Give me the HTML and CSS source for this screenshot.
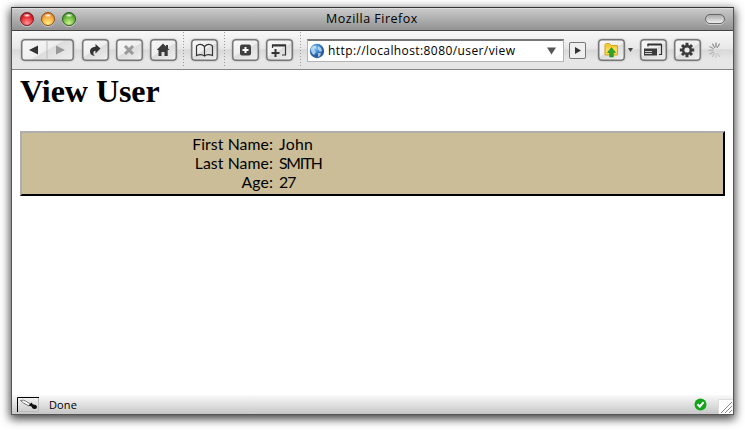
FILE: index.html
```html
<!DOCTYPE html>
<html lang="en">
<head>
<meta charset="utf-8">
<title>Mozilla Firefox</title>
<link rel="stylesheet" href="styles.css">
</head>
<body>
<div class="window">
  <header class="titlebar">
    <div class="lights"><i class="light red"></i><i class="light amber"></i><i class="light green"></i></div>
    <span class="title">Mozilla Firefox</span>
    <i class="pill"></i>
  </header>
  <nav class="toolbar">
    <div class="btn history">
      <svg width="52" height="22" viewBox="0 0 52 22"><path d="M26 1v20" stroke="#bbb"/><path d="M8 11l9-4.500v9z" fill="#333"/><path d="M44 11l-9-4.500v9z" fill="#999"/></svg>
    </div>
    <div class="btn reload"><svg width="27" height="22" viewBox="0 0 27 22"><path d="M18.500 9.500L13.500 5v2.800c-3.800.2-5.500 2.200-5.500 4.800 0 2.500 1.700 4.300 5 4.400-2-1.500-2.600-5 .5-5.300v2.800z" fill="#333"/></svg></div>
    <div class="btn stop"><svg width="27" height="22" viewBox="0 0 27 22"><path d="M9 7l8 8m0-8l-8 8" stroke="#999" stroke-width="3"/></svg></div>
    <div class="btn home"><svg width="27" height="22" viewBox="0 0 27 22"><path d="M13 4.500l6.500 6.500h-1.800v6h-3.200v-4h-3v4H8.500v-6H6.700z" fill="#3b3b3b"/><path d="M16 6h2v4h-2z" fill="#3b3b3b"/></svg></div>
    <i class="divider"></i>
    <div class="btn book"><svg width="27" height="22" viewBox="0 0 27 22"><path d="M13.500 7.500Q9.500 3.500 5.500 7v9.500q5-2 8 .5 3-2.500 8-.5V7Q17.500 3.500 13.500 7.500v9.500" fill="none" stroke="#333" stroke-width="1.200"/></svg></div>
    <i class="divider"></i>
    <div class="btn newtab"><svg width="27" height="22" viewBox="0 0 27 22"><rect x="8" y="5.500" width="11" height="11" rx="2" fill="#3f3f3f"/><path d="M13.500 8v6m-3-3h6" stroke="#fff" stroke-width="2"/></svg></div>
    <div class="btn newwin"><svg width="27" height="22" viewBox="0 0 27 22"><path d="M6.500 9V6h13v10H16" fill="none" stroke="#333" stroke-width="1.200"/><path d="M6 6.500h14M9.500 10v8m-4-4h8" stroke="#333" stroke-width="2"/></svg></div>
    <i class="divider"></i>
    <div class="address">
      <svg class="globe" width="16" height="16" viewBox="0 0 16 16"><defs><radialGradient id="sea" cx=".4" cy=".3"><stop offset="0" stop-color="#92cbf3"/><stop offset=".6" stop-color="#3c87cf"/><stop offset="1" stop-color="#2b5fa4"/></radialGradient></defs><circle cx="8" cy="8" r="7.200" fill="url(#sea)"/><path d="M2 5q2-3 5-2l0 2-2 1 1 2 1 1-2 3Q3 11 2 8zM9 3l3 2 1 3-2 1-2-3zM9 10l3 0-1 3-2 1z" fill="#e4f4fd" opacity=".65"/></svg>
      <span class="url">http://localhost:8080/user/view</span>
      <svg class="drop" width="9" height="8" viewBox="0 0 9 8"><path d="M0 .5h9L4.500 7.500z" fill="#555"/></svg>
    </div>
    <div class="go"><svg width="17" height="17" viewBox="0 0 17 17"><path d="M6 5l6 3.500L6 12z" fill="#333"/></svg></div>
    <div class="btn folder"><svg width="27" height="22" viewBox="0 0 27 22"><path d="M7 5.500l1-1h3.500l1.500 2h6.500V16H7z" fill="#f5ca35" stroke="#d4a725"/><path d="M8 8.500h11V15H8z" fill="#f9dc55"/><path d="M13.500 8.500l4 5h-2.200V18h-3.600v-4.500H9.500z" fill="#2fa52a" stroke="#17751a" stroke-width=".5"/></svg></div>
    <svg class="caret" width="5" height="4" viewBox="0 0 5 4"><path d="M0 0h5L2.500 4z" fill="#444"/></svg>
    <div class="btn panes"><svg width="27" height="22" viewBox="0 0 27 22"><path d="M8 7.500V5.500h13.500V15.500h-2.500" fill="none" stroke="#333" stroke-width="1.200"/><path d="M7.500 5.500h14" stroke="#333" stroke-width="2"/><rect x="4" y="9.500" width="13" height="7" fill="#3b3b3b"/><path d="M5 12.500h7M5 14.500h7" stroke="#ccc"/></svg></div>
    <div class="btn gear"><svg width="27" height="22" viewBox="0 0 27 22"><g stroke="#3b3b3b" stroke-width="3"><path d="M13 3.800v14.400M5.800 11h14.400M8 6l10 10M18 6L8 16"/></g><circle cx="13" cy="11" r="5" fill="#3b3b3b"/><circle cx="13" cy="11" r="2.600" fill="#ececec"/></svg></div>
    <svg class="spinner" width="16" height="16" viewBox="0 0 16 16"><g stroke-width="1.100" stroke-linecap="round"><path d="M8 1v4" stroke="#777"/><path d="M4.500 2l2 3.300" stroke="#888"/><path d="M1.800 4.700l3.500 1.900" stroke="#999"/><path d="M1 8.300h4" stroke="#aaa"/><path d="M2 12l3.300-2" stroke="#aaa"/><path d="M4.500 14.500l2-3.200" stroke="#bbb"/><path d="M8 15.300v-3.500M11.500 14.500l-2-3.200" stroke="#c5c5c5"/><path d="M14 12l-3-2M14.500 8.300h-3.500" stroke="#d8d8d8"/><path d="M11.500 2l-2 3.300" stroke="#888"/></g></svg>
  </nav>
  <main class="page">
    <h1>View User</h1>
    <dl class="details">
      <dt>First Name:</dt><dd>John</dd>
      <dt>Last Name:</dt><dd class="caps">SMITH</dd>
      <dt>Age:</dt><dd class="num">27</dd>
    </dl>
  </main>
  <footer class="status">
    <svg class="picker" width="22" height="15" viewBox="0 0 22 15"><path d="M.5 15V.5H22" fill="none" stroke="#000"/><path d="M21.500 1v13.500H1" fill="none" stroke="#bbb"/><path d="M3.500 3.500q3-1 5 .5l5 3-1.500 2-5.500-3z" fill="#fff" stroke="#666" stroke-width=".9"/><path d="M11.500 8.500l3-3 1.500 2q4 0 4 2.500t-3 2q-2-.5-2.500-2.500z" fill="#111"/></svg>
    <span class="done">Done</span>
    <svg class="ok" width="13" height="13" viewBox="0 0 13 13"><circle cx="6.500" cy="6.500" r="6" fill="#12a51b"/><path d="M3.500 6.300l2.300 2.400 3.800-4.500" fill="none" stroke="#fff" stroke-width="2"/></svg>
    <svg class="grip" width="15" height="15" viewBox="0 0 15 15"><path d="M0 0h15v15H0z" fill="#fff"/><path d="M.5 15V.5H15" stroke="#ddd" fill="none"/><path d="M3 14L14 3M7 14l7-7M11 14l3-3" stroke="#888"/></svg>
  </footer>
</div>
</body>
</html>
```
FILE: styles.css
```css
* { box-sizing: border-box; }
body { margin: 0; height: 430px; overflow: hidden; background: #fff; font-family: "Open Sans", "Noto Sans", sans-serif; color: #000; }
svg { display: block; flex: none; }
.window { width: 723px; height: 408px; margin: 7px 0 0 11px; display: flex; flex-direction: column; background: #fff; border: 1px solid #555; border-top-color: #333; box-shadow: 0 3px 9px 1px rgba(0,0,0,.75); }
.titlebar { height: 22px; flex: none; display: flex; align-items: center; justify-content: space-between; padding: 0 8px 0 8px; background: linear-gradient(#c9c9c9, #929292); border-top: 1px solid #ddd; }
.lights { display: flex; gap: 7px; width: 80px; }
.light { width: 14px; height: 14px; margin-top: -1px; border-radius: 50%; border: 1px solid #555; box-shadow: 0 1px 0 #ccc; }
.red { border-color: #77191d; background: radial-gradient(ellipse 4px 2px at 50% 20%, #fff, transparent), radial-gradient(circle at 50% 85%, #ff9694, #e2212a 60%, #9c1019); }
.amber { border-color: #8c4f1b; background: radial-gradient(ellipse 4px 2px at 50% 20%, #fff, transparent), radial-gradient(circle at 50% 85%, #ffef82, #f5a33a 60%, #b75c16); }
.green { border-color: #2b5c1b; background: radial-gradient(ellipse 4px 2px at 50% 20%, #fff, transparent), radial-gradient(circle at 50% 85%, #caf58c, #60b034 60%, #2f751b); }
.title { font-size: 12.5px; line-height: 20px; margin-top: -2px; margin-left: -1px; letter-spacing: .5px; white-space: nowrap; }
.pill { width: 20px; height: 10px; margin-top: -1px; margin-left: 60px; border: 1px solid #666; border-radius: 5px; background: linear-gradient(#aaa, #eee); box-shadow: 0 1px 0 #ccc; }
.toolbar { height: 40px; flex: none; display: flex; align-items: center; padding-left: 9px; border-top: 1px solid #444; border-bottom: 1px solid #858585; background: linear-gradient(#f8f8f8, #e7e7e7 48%, #d9d9d9 49%, #e6e6e6 75%, #e5e5e5); }
.btn { width: 27px; height: 22px; flex: none; border-radius: 4px; background: linear-gradient(150deg, #f9f9f9, #eee 49%, #dcdcdc 51%, #f2f2f2); box-shadow: inset 0 0 0 1.5px #777, 0 0 1px 1px rgba(120,120,120,.2); }
.history { width: 53px; }
.reload { margin-left: 8px; }
.stop, .home, .newwin { margin-left: 7px; }
.divider { height: 36px; width: 1px; flex: none; margin: 0 7px 0 6px; background: repeating-linear-gradient(#999 0 1px, transparent 1px 3px); }
.newwin + .divider { margin-left: 7px; margin-right: 6px; }
.address { width: 257px; height: 23px; flex: none; display: flex; align-items: center; padding: 0 7px 0 1px; background: #fff; border: 1px solid #b4b4b4; border-top: 2px solid #777; }
.url { flex: 1; margin-left: 3px; font-size: 12px; line-height: 20px; letter-spacing: .41px; white-space: nowrap; }
.go { width: 17px; height: 17px; flex: none; margin-left: 5px; background: #eee; box-shadow: inset 0 0 0 1px #777; border-radius: 2px; }
.folder { margin-left: 12px; }
.caret { margin: 0 7px 0 3px; }
.gear { margin-left: 7px; }
.spinner { margin-left: 7px; }
.page { flex: 1; padding: 3px 8px 0 8px; }
h1 { margin: 0; height: 58px; font: bold 32px/37px "Liberation Serif", serif; letter-spacing: -.05px; }
.details { margin: 0; height: 65px; display: grid; grid-template-columns: 251px 1fr; grid-auto-rows: 19px; column-gap: 6px; padding-top: 1px; background: #cbbd98; border: solid; border-width: 2px; border-color: #aeaeae #000 #000 #aeaeae; font-family: Lato, sans-serif; font-size: 15.8px; line-height: 19px; }
dt { text-align: right; letter-spacing: .08px; }
dd { margin: 0; letter-spacing: .3px; }
.caps { letter-spacing: -1.3px; }
.num { letter-spacing: -.8px; }
.status { height: 19px; flex: none; display: flex; align-items: center; padding-left: 5px; background: linear-gradient(#fafafa, #c6c6c6); }
.done { flex: 1; margin-left: 10px; font-size: 11px; line-height: 16px; letter-spacing: .1px; }
.ok { margin-right: 11px; }
.grip { align-self: flex-end; }
```
